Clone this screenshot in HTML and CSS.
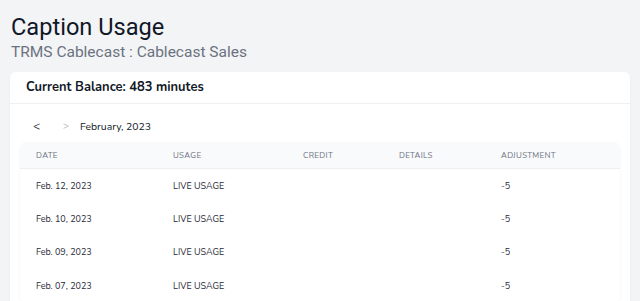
FILE: index.html
```html
<!DOCTYPE html>
<html>
<head>
<meta charset="utf-8">
<link rel="stylesheet" href="styles.css">
</head>
<body>
<div class="page">
  <h1 class="title">Caption Usage</h1>
  <div class="subtitle">TRMS Cablecast : Cablecast Sales</div>
  <div class="card">
    <div class="card-head">Current Balance: 483 minutes</div>
    <div class="card-body">
      <div class="nav">
        <span class="prev">&lt;</span>
        <span class="next">&gt;</span>
        <span class="month">February, 2023</span>
      </div>
      <div class="table">
        <div class="row head">
          <div>Date</div><div>Usage</div><div>Credit</div><div>Details</div><div>Adjustment</div>
        </div>
        <div class="row">
          <div>Feb. 12, 2023</div><div>LIVE USAGE</div><div></div><div></div><div>-5</div>
        </div>
        <div class="row">
          <div>Feb. 10, 2023</div><div>LIVE USAGE</div><div></div><div></div><div>-5</div>
        </div>
        <div class="row">
          <div>Feb. 09, 2023</div><div>LIVE USAGE</div><div></div><div></div><div>-5</div>
        </div>
        <div class="row">
          <div>Feb. 07, 2023</div><div>LIVE USAGE</div><div></div><div></div><div>-5</div>
        </div>
      </div>
    </div>
  </div>
</div>
</body>
</html>
```
FILE: styles.css
```css
html, body {
  margin: 0;
  padding: 0;
  background: #f3f4f6;
  overflow: hidden;
  height: 301px;
}
.page {
  padding: 12px 10px 0 10px;
  font-family: "Nunito", "Lato", "Noto Sans", sans-serif;
}
.title {
  margin: 0;
  font-family: Roboto, "Liberation Sans", sans-serif;
  font-weight: 400;
  font-size: 23.6px;
  line-height: 30px;
  color: #111827;
  padding-left: 1px;
}
.subtitle {
  font-family: Roboto, "Liberation Sans", sans-serif;
  font-size: 15.5px;
  line-height: 20px;
  color: #6b7280;
  padding-left: 1px;
  margin-bottom: 10px;
}
.card {
  background: #fff;
  border-radius: 6px;
  box-shadow: 0 1px 2px rgba(0,0,0,0.06);
  height: 260px;
}
.card-head {
  height: 31px;
  line-height: 31px;
  padding-left: 16px;
  font-weight: 700;
  font-size: 12.9px;
  color: #111827;
  border-bottom: 1px solid #eeeff2;
}
.card-body {
  padding: 12px 10px 0 10px;
}
.nav {
  display: flex;
  align-items: center;
  height: 20px;
  font-size: 10.4px;
  color: #111827;
  padding-left: 13px;
  margin-bottom: 7px;
}
.prev { width: 30px; font-size: 12px; }
.next { width: 17px; color: #9ca3af; font-size: 10px; }
.table {
  border-radius: 6px;
  box-shadow: 0 0 2px rgba(0,0,0,0.08);
  overflow: hidden;
}
.row {
  display: grid;
  grid-template-columns: 137px 130px 96px 102px 1fr;
  padding-left: 16px;
  height: 33.4px;
  align-items: center;
  font-size: 9px;
  color: #1f2937;
}
.row.head {
  height: 25px;
  background: #f9fafb;
  border-bottom: 1px solid #eceef1;
  text-transform: uppercase;
  font-size: 8px;
  letter-spacing: 0.3px;
  color: #6b7280;
}
```
